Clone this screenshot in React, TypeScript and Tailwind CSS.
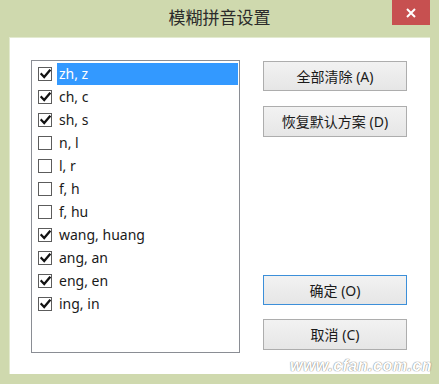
import { ReactNode } from "react";

const items: Array<{ label: string; checked: boolean }> = [
    { label: "zh, z", checked: true },
    { label: "ch, c", checked: true },
    { label: "sh, s", checked: true },
    { label: "n, l", checked: false },
    { label: "l, r", checked: false },
    { label: "f, h", checked: false },
    { label: "f, hu", checked: false },
    { label: "wang, huang", checked: true },
    { label: "ang, an", checked: true },
    { label: "eng, en", checked: true },
    { label: "ing, in", checked: true },
];

const font = "font-['Noto_Sans','Noto_Sans_CJK_SC',sans-serif]";

function CheckBox({ checked }: { checked: boolean }): ReactNode {
    return (
        <div className="w-[14px] h-[14px] border border-[#5c5c5c] bg-white flex items-center justify-center shrink-0">
            {checked && (
                <svg width="11" height="10" viewBox="0 0 11 10">
                    <path d="M1.5 5.2 L4.2 8 L9.6 1.6" fill="none" stroke="#111" strokeWidth="2.3" strokeLinecap="square" />
                </svg>
            )}
        </div>
    );
}

function Button({ label, focused, className }: { label: string; focused?: boolean; className?: string }): ReactNode {
    return (
        <div
            className={`w-[144px] flex items-center justify-center text-[14px] text-[#1a1a1a] bg-gradient-to-b from-[#f2f2f2] to-[#e6e6e6] border ${
                focused ? "border-[#3c8fd9]" : "border-[#adadad]"
            } ${className ?? ""}`}
        >
            {label}
        </div>
    );
}

export default function App(): ReactNode {
    return (
        <div className={`relative w-[439px] h-[384px] bg-[#cfd9ae] flex flex-col ${font}`}>
            {/* Title bar */}
            <div className="h-[37px] flex items-center justify-center text-[17px] text-[#2b2b2b] pb-[1px]">模糊拼音设置</div>
            <div className="absolute right-[9px] top-0 w-[38px] h-[25px] bg-[#c75050] flex items-center justify-center">
                <svg width="10" height="10" viewBox="0 0 10 10">
                    <path d="M1 1 L9 9 M9 1 L1 9" stroke="#fff" strokeWidth="2" />
                </svg>
            </div>

            {/* Client area */}
            <div className="mx-[9px] h-[337px] bg-white border-t border-l border-[#e3ead0] flex pt-[22px] pl-[21px]">
                {/* List */}
                <div className="w-[209px] h-[293px] border border-[#8a8d94] pt-[1px] pl-[6px] pr-[1px]">
                    {items.map((item, i) => (
                        <div key={item.label} className="h-[23px] flex items-center">
                            <CheckBox checked={item.checked} />
                            <div
                                className={`ml-[5px] flex-1 h-[22px] flex items-center pl-[2px] text-[14px] ${
                                    i === 0 ? "bg-[#3399ff] text-white" : "text-[#1a1a1a]"
                                }`}
                            >
                                {item.label}
                            </div>
                        </div>
                    ))}
                </div>

                {/* Buttons */}
                <div className="ml-[23px] h-[293px] flex flex-col pt-[1px] pb-[3px]">
                    <Button label="全部清除 (A)" className="h-[30px]" />
                    <Button label="恢复默认方案 (D)" className="h-[31px] mt-[15px]" />
                    <div className="flex-1" />
                    <Button label="确定 (O)" focused className="h-[30px]" />
                    <Button label="取消 (C)" className="h-[31px] mt-[14px]" />
                </div>
            </div>

            {/* Watermark */}
            <div className="absolute right-[7px] bottom-[6px] text-[16px] italic font-bold text-white tracking-[0.5px] [text-shadow:0_0_1px_#7d7d7d,0_0_1px_#7d7d7d] font-['Liberation_Sans',sans-serif]">
                www.cfan.com.cn
            </div>
        </div>
    );
}
